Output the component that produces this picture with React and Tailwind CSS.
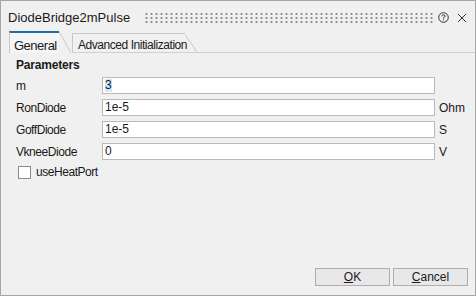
import React from "react";

const rows = [
  { label: "m", value: "3", unit: "", selected: true },
  { label: "RonDiode", value: "1e-5", unit: "Ohm" },
  { label: "GoffDiode", value: "1e-5", unit: "S" },
  { label: "VkneeDiode", value: "0", unit: "V" },
];

function Slant({ h }) {
  return (
    <svg width="12" height={h} className="block shrink-0">
      <line x1="0" y1="0.5" x2="12" y2={h} stroke="#c8c8c8" strokeWidth="1" />
    </svg>
  );
}

export default function App() {
  return (
    <div className="w-[476px] h-[296px] bg-[#f0f0f0] border border-[#a7a7a7] flex flex-col text-[12px] text-[#1a1a1a] font-['Liberation_Sans',Arial,sans-serif]">
      {/* title bar */}
      <div className="h-[29px] flex items-center pl-[7px] pr-[8px] shrink-0">
        <span className="text-[13px] pt-[4px]">DiodeBridge2mPulse</span>
        <div className="ml-[14px] mt-[5px] w-[290px] h-[12px] bg-[radial-gradient(circle,#8c8c8c_1px,transparent_1.2px)] bg-[length:5px_4px]" />
        <div className="ml-auto mt-[4px] flex items-center gap-[8px]">
          <svg width="11" height="11" viewBox="0 0 11 11">
            <circle cx="5.5" cy="5.5" r="4.8" fill="none" stroke="#333" strokeWidth="1" />
            <path d="M3.9 4.3 Q4 2.9 5.5 2.9 Q7.1 2.9 7.1 4.2 Q7.1 5 5.5 5.7 V6.6" fill="none" stroke="#333" strokeWidth="1" />
            <rect x="5" y="7.5" width="1" height="1" fill="#333" />
          </svg>
          <svg width="10" height="10" viewBox="0 0 10 10">
            <path d="M1 1 L9 9 M9 1 L1 9" stroke="#333" strokeWidth="1" />
          </svg>
        </div>
      </div>

      {/* tabs */}
      <div className="flex items-end h-[23px] pl-[8px] shrink-0">
        <div className="flex items-end h-[22px]">
          <div className="h-[22px] w-[50px] border-l border-[#c8c8c8] border-t-2 border-t-[#1c6ea4] pl-[4px] pt-[3px] bg-[#f5f5f5] text-[13px] tracking-[-0.5px] whitespace-nowrap">
            General
          </div>
          <Slant h={22} />
        </div>
        <div className="flex items-end h-[19px] ml-[1px] border-b border-[#d0d0d0]">
          <div className="h-[19px] w-[113px] border-l border-t border-[#c8c8c8] pl-[5px] pt-[2px] tracking-[-0.45px] whitespace-nowrap">
            Advanced Initialization
          </div>
          <Slant h={18} />
        </div>
        <div className="flex-1 border-b border-[#d0d0d0]" />
      </div>

      {/* parameters */}
      <div className="flex-1 pl-[15px] pt-[3px]">
        <div className="font-bold text-[12px] h-[17px] tracking-[-0.2px]">Parameters</div>
        <div className="flex flex-col gap-[5px] mt-[4px]">
          {rows.map((r) => (
            <div key={r.label} className="flex items-center h-[17px]">
              <div className="w-[86px] tracking-[-0.45px]">{r.label}</div>
              <div className="w-[333px] h-[17px] bg-white border border-[#b9b9b9] flex items-center pl-[2px]">
                <span className={r.selected ? "bg-[#cce8ff] leading-[13px]" : "leading-[13px]"}>{r.value}</span>
              </div>
              <div className="pl-[4px]">{r.unit}</div>
            </div>
          ))}
        </div>
        <div className="flex items-center mt-[5px] h-[14px] pl-[2px]">
          <div className="w-[13px] h-[13px] bg-white border border-[#8a8a8a]" />
          <span className="ml-[5px] tracking-[-0.45px]">useHeatPort</span>
        </div>
      </div>

      {/* buttons */}
      <div className="flex justify-end gap-[3px] pr-[7px] pb-[9px] shrink-0">
        <button className="w-[75px] h-[18px] bg-[#e8e8e8] border border-[#adadad] text-[12px] leading-[15px]">
          <span className="underline">O</span>K
        </button>
        <button className="w-[75px] h-[18px] bg-[#e8e8e8] border border-[#adadad] text-[12px] leading-[15px]">
          <span className="underline">C</span>ancel
        </button>
      </div>
    </div>
  );
}
